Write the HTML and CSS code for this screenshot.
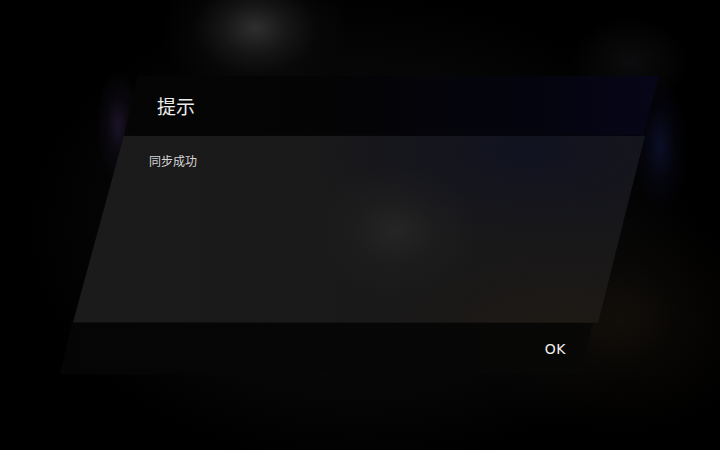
FILE: index.html
```html
<!DOCTYPE html>
<html lang="zh-CN">
<head>
<meta charset="utf-8">
<title>提示</title>
<link rel="stylesheet" href="styles.css">
</head>
<body>
<div class="screen">
  <div class="dialog">
    <div class="dialog-title"><span>提示</span></div>
    <div class="dialog-content"><p>同步成功</p></div>
    <div class="dialog-footer"><span class="ok">OK</span></div>
  </div>
</div>
</body>
</html>
```

FILE: styles.css
```css
html, body {
  margin: 0;
  padding: 0;
  background: #000;
}

.screen {
  width: 720px;
  height: 450px;
  overflow: hidden;
  display: flex;
  align-items: center;
  justify-content: center;
  font-family: "Noto Sans CJK SC", "Noto Sans", sans-serif;
  background:
    radial-gradient(ellipse 95px 70px at 255px 28px, rgba(62,62,62,0.75) 0%, rgba(45,45,45,0.45) 35%, rgba(25,25,25,0.2) 65%, transparent 100%),
    radial-gradient(ellipse 22px 55px at 118px 125px, rgba(55,38,80,0.45) 0%, rgba(40,28,60,0.2) 50%, transparent 100%),
    radial-gradient(ellipse 28px 70px at 660px 145px, rgba(22,26,75,0.5) 0%, rgba(15,18,50,0.2) 55%, transparent 100%),
    radial-gradient(ellipse 60px 45px at 630px 62px, rgba(40,40,46,0.3) 0%, transparent 100%),
    radial-gradient(ellipse 150px 120px at 620px 320px, rgba(30,23,15,0.55) 0%, rgba(20,16,11,0.25) 55%, transparent 100%),
    radial-gradient(ellipse 340px 240px at 360px 230px, #0b0b0d 0%, #070708 60%, #000 100%);
}

.dialog {
  width: 600px;
  display: flex;
  flex-direction: column;
}

.dialog-title {
  height: 60px;
  display: flex;
  align-items: center;
  padding-left: 97px;
  box-sizing: border-box;
  clip-path: polygon(78px 0, 599px 0, 583px 60px, 64px 60px);
  background: linear-gradient(to right, #050505 0%, #040405 45%, #04040f 80%, #060618 100%);
  color: #ececec;
  font-size: 19px;
  line-height: 1;
}

.dialog-content {
  height: 187px;
  box-sizing: border-box;
  padding: 17px 0 0 89px;
  clip-path: polygon(64px 0, 585px 0, 538px 187px, 13px 187px);
  background:
    radial-gradient(ellipse 80px 65px at 335px 95px, rgba(40,40,40,0.8) 0%, rgba(34,34,34,0.4) 50%, transparent 100%),
    radial-gradient(ellipse 220px 90px at 470px 15px, rgba(16,18,34,0.85) 0%, rgba(18,19,30,0.4) 60%, transparent 100%),
    radial-gradient(ellipse 220px 120px at 500px 200px, rgba(31,26,20,0.9) 0%, rgba(28,24,20,0.4) 60%, transparent 100%),
    linear-gradient(to right, #1b1b1c 0%, #19191a 50%, #17171a 100%);
}

.dialog-content p {
  margin: 0;
  font-size: 12px;
  line-height: 16px;
  color: #d6d6d6;
}

.dialog-footer {
  height: 52px;
  box-sizing: border-box;
  display: flex;
  align-items: center;
  justify-content: flex-end;
  padding-right: 94px;
  clip-path: polygon(12px 0, 533px 0, 520px 52px, 0 52px);
  background: linear-gradient(to right, #050505 0%, #060606 50%, #090807 100%);
}

.ok {
  font-family: "DejaVu Sans", sans-serif;
  font-size: 14px;
  color: #f0f0f0;
  letter-spacing: 0.5px;
}
```
